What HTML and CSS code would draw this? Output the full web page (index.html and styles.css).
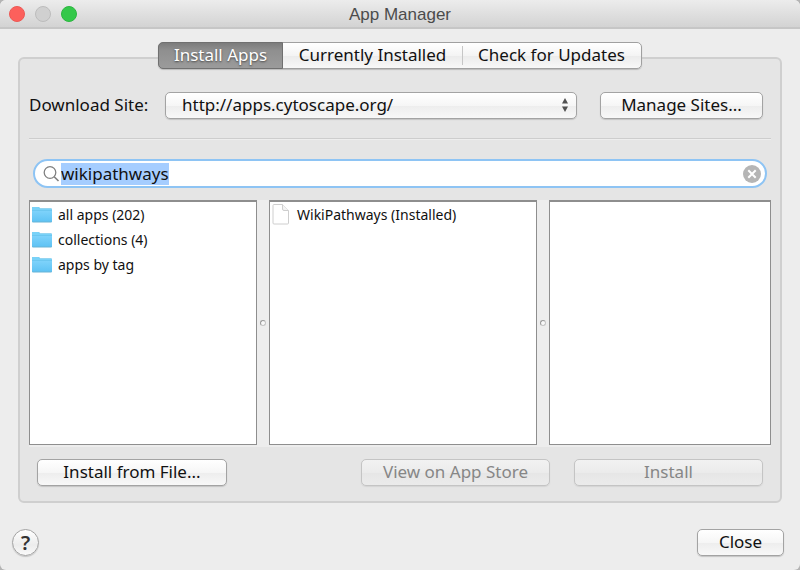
FILE: index.html
```html
<!DOCTYPE html>
<html lang="en">
<head>
    <meta charset="UTF-8">
    <meta name="viewport" content="width=device-width, initial-scale=1.0">
    <title>App Manager</title>
    <link rel="stylesheet" href="styles.css">
</head>
<body>

<div class="window">
    <header class="titlebar">
        <div class="lights">
            <button class="light red" aria-label="Close window"></button>
            <button class="light grey" aria-label="Minimize"></button>
            <button class="light green" aria-label="Zoom"></button>
        </div>
        <h1>App Manager</h1>
    </header>

    <nav class="tabs">
        <button class="tab active">Install Apps</button>
        <button class="tab">Currently Installed</button>
        <button class="tab">Check for Updates</button>
    </nav>

    <main class="panel">
        <div class="site-row">
            <label for="site">Download Site:</label>
            <div class="select-box">
                <select id="site">
                    <option>http://apps.cytoscape.org/</option>
                </select>
                <svg class="arrows" width="8" height="16" viewBox="0 0 8 16"><path d="M4 1L7 6.5H1zM4 15L1 9.5H7z" fill="#505050"/></svg>
            </div>
            <button class="btn manage">Manage Sites...</button>
        </div>

        <hr>

        <div class="search">
            <svg width="18" height="18" viewBox="0 0 18 18" fill="none" stroke="#808080"><circle cx="7" cy="7.5" r="5.8" stroke-width="1.3"/><path d="M11.2 11.7L15.5 16" stroke-width="1.6"/></svg>
            <input type="text" id="search" aria-label="Search apps" value="wikipathways" spellcheck="false" autocomplete="off">
            <button class="clear" aria-label="Clear search">
                <svg width="18" height="18" viewBox="0 0 18 18"><circle cx="9" cy="9" r="9" fill="#b5b5b5"/><path d="M5.3 5.3L12.7 12.7M12.7 5.3L5.3 12.7" stroke="#fff" stroke-width="2"/></svg>
            </button>
        </div>

        <svg class="defs" width="0" height="0">
            <defs>
                <linearGradient id="blue" x1="0" y1="0" x2="0" y2="1">
                    <stop offset="0" stop-color="#7fd3fb"/>
                    <stop offset="1" stop-color="#5fc3f4"/>
                </linearGradient>
                <symbol id="folder" viewBox="0 0 20 17">
                    <path d="M0 2Q0 1 1 1H6Q7 1 7.4 1.6L8 2.4H19Q20 2.4 20 3.4V15.5Q20 16.5 19 16.5H1Q0 16.5 0 15.5z" fill="#68b4d6"/>
                    <path d="M0 2Q0 1 1 1H6Q7 1 7.4 1.6L8 2.4H19Q20 2.4 20 3.4V5H0z" fill="#79d2f8"/>
                    <path d="M0 4.5H20V15.5H0z" fill="url(#blue)"/>
                    <path d="M0 4.5H20" stroke="#62bfe9" stroke-width=".6"/>
                </symbol>
            </defs>
        </svg>

        <div class="panes">
            <ul class="pane">
                <li><svg width="20" height="17"><use href="#folder"/></svg>all apps (202)</li>
                <li><svg width="20" height="17"><use href="#folder"/></svg>collections (4)</li>
                <li><svg width="20" height="17"><use href="#folder"/></svg>apps by tag</li>
            </ul>
            <div class="splitter"><span></span></div>
            <ul class="pane">
                <li><svg width="19" height="21" viewBox="0 0 19 21" fill="#fff" stroke="#cecece"><path d="M2 .5H10.5L16.5 6.5V19Q16.5 20 15.5 20H2Q1 20 1 19V1.5Q1 .5 2 .5z"/><path d="M10.5 .5V5Q10.5 6.5 12 6.5H16.5" fill="#f4f4f4"/></svg>WikiPathways (Installed)</li>
            </ul>
            <div class="splitter"><span></span></div>
            <div class="pane"></div>
        </div>

        <div class="actions">
            <button class="btn">Install from File...</button>
            <button class="btn push" disabled>View on App Store</button>
            <button class="btn" disabled>Install</button>
        </div>
    </main>

    <footer>
        <button class="help" aria-label="Help">?</button>
        <button class="btn close">Close</button>
    </footer>
</div>

<script>
    const search = document.getElementById('search');
    search.focus();
    search.select();

    document.querySelector('.clear').addEventListener('click', function () {
        search.value = '';
        search.focus();
    });
</script>

</body>
</html>
```
FILE: styles.css
```css
* {
    box-sizing: border-box;
}
body {
    margin: 0;
    background: #b4b4b4;
    color: #111;
    font-family: "Noto Sans", "Open Sans", sans-serif;
    font-size: 17px;
}
button, input, select {
    font: inherit;
    color: inherit;
    padding: 0;
    margin: 0;
}
.window {
    display: flex;
    flex-direction: column;
    min-height: 100vh;
    background: #ededed;
    border-radius: 6px;
    overflow: hidden;
}
.titlebar {
    display: grid;
    grid-template-columns: 1fr auto 1fr;
    align-items: center;
    height: 29px;
    padding: 0 9px;
    background: linear-gradient(#ececec, #d3d3d3);
    border-bottom: 2px solid #c6c6c6;
}
.titlebar h1 {
    margin: 0;
    padding-top: 2px;
    font-family: "Liberation Sans", Arial, sans-serif;
    font-size: 17px;
    font-weight: normal;
    line-height: 25px;
    color: #4c4c4c;
}
.lights {
    display: flex;
    gap: 10px;
}
.light {
    width: 16px;
    height: 16px;
    border: 1px solid;
    border-radius: 50%;
}
.red {
    background: #fc605c;
    border-color: #ec5955;
}
.grey {
    background: #d0d0d0;
    border-color: #bcbcbc;
}
.green {
    background: #34c84a;
    border-color: #2cb640;
}
.tabs {
    display: flex;
    align-self: center;
    position: relative;
    margin-top: 13px;
    height: 27px;
    border: 1px solid #a0a0a0;
    border-radius: 5px;
    background: linear-gradient(#fff, #f4f4f4 50%, #ebebeb 51%, #f8f8f8);
    box-shadow: 0 1px 1px #bbb;
}
.tab {
    width: 179px;
    border: none;
    background: none;
    line-height: 23px;
    padding-bottom: 2px;
    position: relative;
}
.tab + .tab + .tab::before {
    content: "";
    position: absolute;
    left: 0;
    top: 3px;
    bottom: 3px;
    border-left: 1px solid #c6c6c6;
}
.tab.active {
    width: 125px;
    margin: -1px 0 -1px -1px;
    color: #fff;
    background: linear-gradient(#7c7c7c, #8f8f8f 30%, #9b9b9b);
    border: 1px solid #707070;
    border-radius: 5px 0 0 5px;
    text-shadow: 0 1px 2px #444;
}
.panel {
    flex: 1;
    display: flex;
    flex-direction: column;
    margin: -12px 18px 0;
    padding: 33px 9px 15px;
    background: #e5e5e5;
    border: 2px solid #cfcfcf;
    border-radius: 6px;
}
.site-row {
    display: flex;
    align-items: center;
    padding-right: 8px;
}
.site-row label {
    width: 136px;
    line-height: 24px;
    padding-bottom: 2px;
}
.select-box {
    flex: 1;
    position: relative;
    margin-right: 23px;
}
.select-box select {
    display: block;
    width: 100%;
    height: 27px;
    padding: 0 30px 2px 16px;
    appearance: none;
}
.arrows {
    position: absolute;
    right: 8px;
    top: 5px;
    pointer-events: none;
}
.btn, .select-box select {
    border: 1px solid #a3a3a3;
    border-radius: 5px;
    background: linear-gradient(#fff, #f6f6f6 50%, #ededed 51%, #f8f8f8);
    box-shadow: 0 1px 1px #c4c4c4;
}
.btn {
    width: 190px;
    height: 27px;
    padding-bottom: 2px;
    line-height: 23px;
}
.btn:disabled {
    color: #868686;
    border-color: #c4c4c4;
    background: linear-gradient(#f2f2f2, #ebebeb 50%, #e6e6e6 51%, #ebebeb);
    box-shadow: 0 1px 1px #d4d4d4;
}
.manage {
    width: 163px;
}
hr {
    width: 100%;
    margin: 19px 0;
    border: none;
    border-top: 1px solid #cdcdcd;
    border-bottom: 1px solid #eee;
}
.search {
    display: flex;
    align-items: center;
    height: 29px;
    margin: 0 4px 12px;
    padding: 0 4px 0 8px;
    background: #fff;
    border: 2px solid #8ec4f4;
    border-radius: 15px;
}
.search svg {
    flex: none;
}
.search input {
    flex: 1;
    min-width: 0;
    height: 22px;
    border: none;
    outline: none;
    background: none;
}
.search input::selection {
    background: #a5cdff;
    color: #111;
}
.clear {
    width: 18px;
    height: 18px;
    border: none;
    background: none;
}
.clear svg {
    display: block;
}
.defs {
    position: absolute;
}
.panes {
    flex: 1;
    display: grid;
    grid-template-columns: 228fr 12px 268fr 12px 222fr;
    background: #ededed;
    padding-bottom: 2px;
}
.pane {
    margin: 0;
    padding: 0 2px;
    list-style: none;
    background: #fff;
    border: 1px solid #8e8e8e;
    border-top-width: 2px;
    font-size: 14px;
}
.pane li {
    display: flex;
    align-items: center;
    gap: 6px;
    height: 25px;
    line-height: 24px;
}
.splitter {
    display: flex;
    align-items: center;
    justify-content: center;
}
.splitter span {
    width: 6px;
    height: 6px;
    border: 1px solid #c4c4c4;
    border-top-color: #999;
    border-left-color: #999;
    border-radius: 50%;
    background: #f8f8f8;
}
.actions {
    display: flex;
    gap: 24px;
    margin-top: 12px;
    padding: 0 8px;
}
.actions .btn:disabled {
    width: 189px;
}
.push {
    margin-left: auto;
}
footer {
    display: flex;
    justify-content: space-between;
    align-items: center;
    padding: 26px 16px 14px 12px;
}
.help {
    width: 27px;
    height: 27px;
    border: 1px solid #a3a3a3;
    border-radius: 50%;
    background: linear-gradient(#fff, #ececec 60%, #fafafa);
    box-shadow: 0 1px 1px #c4c4c4;
    font-size: 20px;
    font-weight: 600;
    line-height: 24px;
    color: #333;
}
.close {
    width: 87px;
}
```
